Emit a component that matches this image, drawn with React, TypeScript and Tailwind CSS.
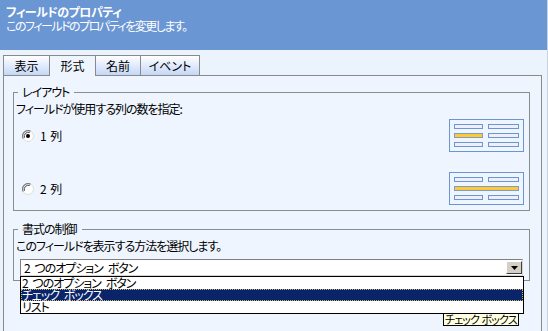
import React from "react";

function Bar({ wide, yellow }: { wide?: "l" | "r" | "f"; yellow?: boolean }) {
  const w = wide === "l" ? "w-[29px]" : wide === "r" ? "w-[31px]" : "w-[65px]";
  return (
    <div
      className={`${w} h-[5px] border ${
        yellow ? "border-[#7E9CC8] bg-[#FFC933]" : "border-[#6A96D4] bg-[#EEEFF7]"
      }`}
    />
  );
}

function LayoutIcon({ full }: { full?: boolean }) {
  return (
    <div className="w-[75px] h-[33px] border border-[#6A96D4] p-[4px] flex flex-col gap-[4px]">
      <div className="flex gap-[5px]">
        <Bar wide="l" />
        <Bar wide="r" />
      </div>
      {full ? (
        <div className="flex">
          <Bar wide="f" yellow />
        </div>
      ) : (
        <div className="flex gap-[5px]">
          <Bar wide="l" yellow />
          <Bar wide="r" />
        </div>
      )}
      <div className="flex gap-[5px]">
        <Bar wide="l" />
        <Bar wide="r" />
      </div>
    </div>
  );
}

function Radio({ checked }: { checked?: boolean }) {
  return (
    <svg width="12" height="12" viewBox="0 0 12 12" className="shrink-0">
      <circle cx="6" cy="6" r="5.5" fill="#ffffff" stroke="#DCDCDC" strokeWidth="1" />
      <path d="M1.2 8.6 A5.5 5.5 0 0 1 8.6 1.2" fill="none" stroke="#808080" strokeWidth="1.2" />
      <path d="M2.4 7.8 A4.3 4.3 0 0 1 7.8 2.4" fill="none" stroke="#404040" strokeWidth="1" />
      {checked && <circle cx="6" cy="6" r="2" fill="#000000" />}
    </svg>
  );
}

export default function App() {
  return (
    <div className="relative w-[548px] h-[331px] overflow-hidden bg-[#EBF3FD] border-r border-[#C9D2DE] font-['Noto_Sans_CJK_JP',sans-serif] [font-feature-settings:'palt'] text-[12px] leading-[14px] tracking-[-1px] text-black">
      <div className="h-[50px] bg-[#6A96D4] px-[6px] pt-[5px] text-white">
        <div className="font-bold tracking-[-0.5px]">フィールドのプロパティ</div>
        <div className="tracking-[-1.5px]">このフィールドのプロパティを変更します。</div>
      </div>
      <div className="pt-[5px] pl-[3px] pr-[5px]">
        <div className="relative z-10 flex -mb-px tracking-[0px]">
          <div className="w-[46px] h-[21px] flex items-center justify-center border-l border-t border-b border-[#8A8A8A] bg-gradient-to-b from-[#FFFFFF] to-[#C4D7F6]">
            表示
          </div>
          <div className="w-[46px] h-[21px] flex items-center justify-center border-l border-t border-[#8A8A8A] bg-[#EEF5FE]">
            形式
          </div>
          <div className="w-[45px] h-[21px] flex items-center justify-center border-l border-t border-b border-[#8A8A8A] bg-gradient-to-b from-[#FFFFFF] to-[#C4D7F6]">
            名前
          </div>
          <div className="w-[60px] h-[21px] flex items-center justify-center border-l border-t border-r border-b border-[#8A8A8A] bg-gradient-to-b from-[#FFFFFF] to-[#C4D7F6]">
            イベント
          </div>
        </div>
        <div className="h-[270px] border border-b-0 border-[#8A8A8A] bg-[#EEF5FE] pt-[9px]">
          <fieldset className="ml-[9px] w-[517px] border border-[#8C8C8C] pl-[2px] pr-[5px] pb-[5px]">
            <legend className="ml-[2px] px-[4px] pr-[5px]">レイアウト</legend>
            <div className="mt-[3px]">フィールドが使用する列の数を指定:</div>
            <div className="mt-[3px] flex items-center justify-between">
              <div className="ml-[6px] flex items-center gap-[6px]">
                <Radio checked />
                <span className="tracking-[0px] [word-spacing:1px]">1 列</span>
              </div>
              <LayoutIcon />
            </div>
            <div className="mt-[20px] flex items-center justify-between">
              <div className="ml-[6px] flex items-center gap-[6px]">
                <Radio />
                <span className="tracking-[0px] [word-spacing:1px]">2 列</span>
              </div>
              <LayoutIcon full />
            </div>
          </fieldset>
          <fieldset className="mt-[11px] ml-[9px] w-[517px] border border-[#8C8C8C] pl-[2px] pr-[5px] pb-[4px]">
            <legend className="ml-[2px] px-[4px] pr-[5px]">書式の制御</legend>
            <div className="mt-[3px]">このフィールドを表示する方法を選択します。</div>
            <div className="relative mt-[6px] ml-[4px] w-[503px]">
              <div className="h-[17px] flex items-center justify-between border border-t-[#7F7F7F] border-l-[#7F7F7F] border-b-[#D8D5CE] border-r-[#D8D5CE] bg-white pl-[3px]">
                <span className="leading-[12px] whitespace-pre [word-spacing:3px]">2 つのオプション ボタン</span>
                <div className="w-[16px] h-[13px] flex items-center justify-center bg-[#D4D0C8] border border-t-[#FFFFFF] border-l-[#FFFFFF] border-b-[#404040] border-r-[#404040]">
                  <svg width="7" height="4" viewBox="0 0 7 4">
                    <path d="M0 0 H7 L3.5 4 Z" fill="#000000" />
                  </svg>
                </div>
              </div>
              <div className="absolute left-0 top-full z-20 w-[504px] border border-black bg-white leading-[12px] [word-spacing:3px]">
                <div className="h-[12px] pl-[1px] whitespace-pre">2 つのオプション ボタン</div>
                <div className="h-[12px] pl-[1px] bg-[#0A246A] text-white outline-1 outline-dotted -outline-offset-1 outline-[#C9B46A] whitespace-pre">
                  チェック ボックス
                </div>
                <div className="h-[12px] pl-[1px] whitespace-pre">リスト</div>
              </div>
            </div>
          </fieldset>
        </div>
      </div>
      <div className="absolute left-[443px] top-[313px] z-30 h-[13px] flex items-center border border-black bg-[#FFFFE1] px-[1px] text-[11px] leading-[11px] tracking-[-0.9px] [word-spacing:1px] whitespace-nowrap">
        <span>チェック ボックス</span>
      </div>
    </div>
  );
}
